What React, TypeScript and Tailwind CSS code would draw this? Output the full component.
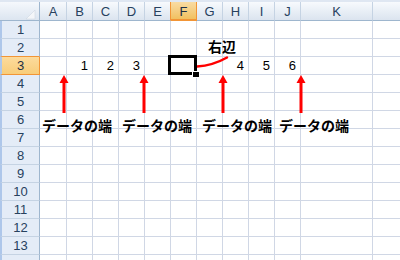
import React from "react";

type Col = { l: string; w: string };

const cols: Col[] = [
  { l: "A", w: "w-[27px]" },
  { l: "B", w: "w-[26px]" },
  { l: "C", w: "w-[26px]" },
  { l: "D", w: "w-[26px]" },
  { l: "E", w: "w-[26px]" },
  { l: "F", w: "w-[26px]" },
  { l: "G", w: "w-[26px]" },
  { l: "H", w: "w-[26px]" },
  { l: "I", w: "w-[26px]" },
  { l: "J", w: "w-[26px]" },
  { l: "K", w: "w-[72px]" },
  { l: "", w: "w-[60px]" },
];

const data: Record<string, string> = { B: "1", C: "2", D: "3", H: "4", I: "5", J: "6" };

const rows = Array.from({ length: 14 }, (_, i) => i + 1);

function Arrow({ cx }: { cx: number }) {
  return (
    <g fill="#ff0000">
      <polygon points={`${cx - 4.5},83 ${cx},75 ${cx + 4.5},83`} />
      <rect x={cx - 1.5} y={82} width={3} height={31} />
    </g>
  );
}

export default function App() {
  return (
    <div className="relative w-[400px] h-[260px] overflow-hidden bg-white font-['Liberation_Sans',sans-serif] text-[13px]">
      {/* top strip */}
      <div className="h-[2px] bg-[#dfe7f2]" />
      {/* column headers */}
      <div className="flex h-[19px]">
        <div className="relative w-[40px] shrink-0 border-r border-b border-[#9eb6ce] bg-linear-to-b from-[#f5f8fc] to-[#dce5f0]">
          <svg className="absolute left-0 top-0" width="40" height="18">
            <polygon points="35,8 35,17 26,17" fill="#f4f6f9" stroke="#c9d3df" strokeWidth="0.5" />
          </svg>
        </div>
        {cols.map((c, i) => {
          const sel = c.l === "F";
          const beforeSel = c.l === "E";
          return (
            <div
              key={i}
              className={`${c.w} shrink-0 flex items-end justify-center leading-[14px] ${
                sel
                  ? "border-r border-b-2 border-r-[#f29536] border-b-[#f29536] bg-linear-to-b from-[#f9dba2] to-[#f1c15f] text-[#1e2f45]"
                  : `border-r border-b border-b-[#9eb6ce] ${beforeSel ? "border-r-[#f29536]" : "border-r-[#c5d3e3]"} bg-linear-to-b from-[#f7fafd] to-[#dbe4ef] text-[#27415e]`
              }`}
            >
              <span className={sel ? "pb-[0px]" : "pb-[1px]"}>{c.l}</span>
            </div>
          );
        })}
      </div>
      {/* rows */}
      {rows.map((r) => {
        const selRow = r === 3;
        const aboveSel = r === 2;
        return (
          <div key={r} className="flex h-[18px]">
            <div
              className={`w-[40px] shrink-0 flex items-end justify-center border-l-2 border-l-[#aec7ea] border-r border-b leading-[14px] pb-[1px] ${
                selRow
                  ? "border-r-[#f29536] border-b-[#f29536] bg-linear-to-b from-[#fcdb9c] to-[#f8cd7a] text-[#1e2f45]"
                  : `border-r-[#9eb6ce] ${aboveSel ? "border-b-[#f29536]" : "border-b-[#c5d3e3]"} bg-[#e4ecf7] text-[#27415e]`
              }`}
            >
              {r <= 13 ? r : ""}
            </div>
            {cols.map((c, i) => (
              <div
                key={i}
                className={`${c.w} shrink-0 flex items-end justify-end border-r border-b border-[#d0d7e5] leading-[14px] pb-[1px] pr-[4px] text-black`}
              >
                {r === 3 && data[c.l] ? data[c.l] : ""}
              </div>
            ))}
          </div>
        );
      })}

      {/* overlays */}
      <svg className="absolute left-0 top-0 pointer-events-none" width="400" height="260">
        <Arrow cx={64} />
        <Arrow cx={144} />
        <Arrow cx={223} />
        <Arrow cx={301} />
        <path d="M197 66.5 Q213 65.5 227 57.5" stroke="#ff0000" strokeWidth="2.5" fill="none" strokeLinecap="round" />
      </svg>

      {/* active cell */}
      <div className="absolute left-[168px] top-[55px] w-[29px] h-[20px] border-[3px] border-black" />
      <div className="absolute left-[192px] top-[71px] w-[8px] h-[7px] bg-black border border-white" />

      {/* labels */}
      <div className="absolute left-[208px] top-[39px] font-['Noto_Sans_CJK_JP',sans-serif] font-bold text-[14px] leading-none text-black">
        右辺
      </div>
      {[42, 122, 202, 279].map((x, i) => (
        <div
          key={i}
          className="absolute top-[118px] font-['Noto_Sans_CJK_JP',sans-serif] font-bold text-[14px] leading-none text-black whitespace-nowrap"
          style={{ left: x }}
        >
          データの端
        </div>
      ))}
    </div>
  );
}
